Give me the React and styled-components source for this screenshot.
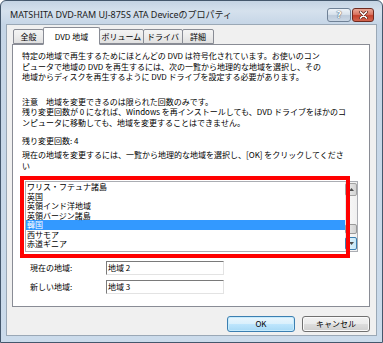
import styled, { createGlobalStyle } from 'styled-components'

const GlobalStyle = createGlobalStyle`
  * { box-sizing: border-box; }
  html, body { margin: 0; padding: 0; background: #fff; }
  body {
    font-family: "Noto Sans CJK JP", "Noto Sans", sans-serif;
    color: #000;
  }
`

const regions = [
  'ワリス・フテュナ諸島',
  '英国',
  '英領インド洋地域',
  '英領バージン諸島',
  '韓国',
  '西サモア',
  '赤道ギニア',
]

const tabs = [
  { label: '全般', w: 31 },
  { label: 'DVD 地域', w: 57, selected: true },
  { label: 'ボリューム', w: 45 },
  { label: 'ドライバ', w: 40 },
  { label: '詳細', w: 32 },
]

function Arrow({ down }) {
  return (
    <svg width="5" height="3" viewBox="0 0 5 3">
      <polygon points={down ? '0,0 5,0 2.5,3' : '0,3 5,3 2.5,0'} fill="#4d4d4d" />
    </svg>
  )
}

function CloseGlyph() {
  return (
    <svg width="9" height="8" viewBox="0 0 9 8">
      <path d="M1.5 1 L7.5 7 M7.5 1 L1.5 7" stroke="#5a1d14" strokeWidth="3" strokeLinecap="round" />
      <path d="M1.5 1 L7.5 7 M7.5 1 L1.5 7" stroke="#fff" strokeWidth="1.7" strokeLinecap="round" />
    </svg>
  )
}

export default function App() {
  return (
    <>
      <GlobalStyle />
      <Window>
        <TitleBar>
          <Title>MATSHITA DVD-RAM UJ-875S ATA Deviceのプロパティ</Title>
          <CaptionButtons>
            <CaptionButton $w={24}>
              <HelpGlyph>?</HelpGlyph>
            </CaptionButton>
            <CaptionButton $w={22} $close>
              <CloseGlyph />
            </CaptionButton>
          </CaptionButtons>
        </TitleBar>

        <Client>
          <TabRow>
            {tabs.map((t, i) => (
              <Tab key={t.label} $w={t.w} $selected={t.selected} $first={i === 0}>
                {t.label}
              </Tab>
            ))}
          </TabRow>

          <Panel>
            <Para>
              特定の地域で再生するためにほとんどの DVD は符号化されています。お使いのコン<br />
              ピュータで地域の DVD を再生するには、次の一覧から地理的な地域を選択し、その<br />
              地域からディスクを再生するように DVD ドライブを設定する必要があります。
            </Para>
            <Para $mt={14}>
              注意　地域を変更できるのは限られた回数のみです。<br />
              残り変更回数が 0 になれば、Windows を再インストールしても、DVD ドライブをほかのコ<br />
              ンピュータに移動しても、地域を変更することはできません。
            </Para>
            <Para $mt={8}>残り変更回数: 4</Para>
            <Para $mt={3.5}>
              現在の地域を変更するには、一覧から地理的な地域を選択し、[OK] をクリックしてくださ<br />
              い
            </Para>

            <ListBox>
              <Items>
                {regions.map((r) => (
                  <Item key={r} $selected={r === '韓国'}>{r}</Item>
                ))}
              </Items>
              <ScrollBar>
                <ScrollButton><Arrow /></ScrollButton>
                <Track>
                  <Thumb />
                </Track>
                <ScrollButton $hover><Arrow down /></ScrollButton>
              </ScrollBar>
              <Highlight />
            </ListBox>

            <FieldRow $mt={9}>
              <FieldLabel>現在の地域:</FieldLabel>
              <FieldValue>地域 2</FieldValue>
            </FieldRow>
            <FieldRow $mt={5}>
              <FieldLabel>新しい地域:</FieldLabel>
              <FieldValue>地域 3</FieldValue>
            </FieldRow>
          </Panel>

          <ButtonRow>
            <Button $default>OK</Button>
            <Button>キャンセル</Button>
          </ButtonRow>
        </Client>
      </Window>
    </>
  )
}

const Window = styled.div`
  width: 383px;
  height: 343px;
  display: flex;
  flex-direction: column;
  border: 1px solid #44576c;
  border-radius: 6px 6px 0 0;
  background: linear-gradient(180deg, #c4d3e3 0px, #d5e1ed 10px, #c5d5e6 24px, #cbdbeb 100%);
  overflow: hidden;
`

const TitleBar = styled.div`
  height: 23px;
  display: flex;
  align-items: flex-start;
  padding: 0 8px 0 9px;
`

const Title = styled.div`
  flex: 1;
  margin-top: 7px;
  font-family: "Noto Sans", "Noto Sans CJK JP", sans-serif;
  font-size: 9px;
  line-height: 14px;
  color: #1c1c1c;
  white-space: nowrap;
`

const CaptionButtons = styled.div`
  display: flex;
  gap: 1px;
  margin-top: 7px;
`

const CaptionButton = styled.div`
  width: ${({ $w }) => $w}px;
  height: 14px;
  border-radius: 3px;
  border: 1px solid ${({ $close }) => ($close ? '#6e2a20' : '#6f8196')};
  background: ${({ $close }) =>
    $close
      ? 'linear-gradient(180deg, #eaa998 0%, #d97461 45%, #c4412c 55%, #d2644e 100%)'
      : 'linear-gradient(180deg, #eef3f8 0%, #d8e2ec 45%, #bdcbdb 55%, #cad7e5 100%)'};
  display: flex;
  align-items: center;
  justify-content: center;
`

const HelpGlyph = styled.span`
  font-family: "DejaVu Sans", sans-serif;
  font-weight: bold;
  font-size: 9px;
  line-height: 1;
  color: #fff;
  text-shadow: 0 0 1px #3d4a58, 0 0 1px #3d4a58;
`

const Client = styled.div`
  flex: 1;
  margin: 0 5px 6px 5px;
  border: 1px solid #9aa8b6;
  background: #f0f0f0;
  padding: 2px 6px 0 5px;
  display: flex;
  flex-direction: column;
`

const TabRow = styled.div`
  position: relative;
  z-index: 1;
  display: flex;
  align-items: flex-end;
  height: 17px;
  padding-left: 1px;
`

const Tab = styled.div`
  width: ${({ $w }) => $w}px;
  height: ${({ $selected }) => ($selected ? 18 : 15)}px;
  margin-bottom: ${({ $selected }) => ($selected ? -1 : 0)}px;
  margin-left: ${({ $first }) => ($first ? 0 : -1)}px;
  border: 1px solid #898c95;
  border-bottom: ${({ $selected }) => ($selected ? '1px solid #fff' : '1px solid #898c95')};
  border-radius: 2px 2px 0 0;
  background: ${({ $selected }) =>
    $selected ? '#fff' : 'linear-gradient(180deg, #f4f4f4 0%, #ececec 50%, #e0e0e0 100%)'};
  position: relative;
  z-index: ${({ $selected }) => ($selected ? 2 : 1)};
  display: flex;
  align-items: center;
  justify-content: center;
  font-size: 8px;
  white-space: nowrap;
`

const Panel = styled.div`
  height: 263px;
  border: 1px solid #898c95;
  background: #fff;
  padding: 6px 9px 0 9px;
  font-size: 8px;
  line-height: 10.5px;
`

const Para = styled.p`
  margin: ${({ $mt }) => $mt || 0}px 0 0 0;
  white-space: nowrap;
`

const ListBox = styled.div`
  position: relative;
  display: flex;
  margin: 10px 0 0 3px;
  width: 333px;
  height: 71px;
  border: 1px solid #abadb3;
  background: #fff;
`

const Items = styled.div`
  flex: 1;
  overflow: hidden;
`

const Item = styled.div`
  height: 9.5px;
  line-height: 9.5px;
  padding-left: 1px;
  font-size: 8px;
  white-space: nowrap;
  background: ${({ $selected }) => ($selected ? '#3399ff' : 'transparent')};
  color: ${({ $selected }) => ($selected ? '#fff' : '#000')};
`

const ScrollBar = styled.div`
  width: 12px;
  display: flex;
  flex-direction: column;
  padding: 1px 0;
  background: linear-gradient(90deg, #e6e6e6, #f6f6f6 40%, #f0f0f0);
`

const ScrollButton = styled.div`
  height: 13px;
  border: 1px solid ${({ $hover }) => ($hover ? '#3c7fb1' : '#a3a3a3')};
  border-radius: 2px;
  background: ${({ $hover }) =>
    $hover
      ? 'linear-gradient(90deg, #e3f4fc, #c8e8f8)'
      : 'linear-gradient(90deg, #f2f2f2, #e2e2e2 50%, #d4d4d4)'};
  display: flex;
  align-items: center;
  justify-content: center;
`

const Track = styled.div`
  flex: 1;
  display: flex;
  flex-direction: column;
  justify-content: flex-end;
  padding-bottom: 3px;
`

const Thumb = styled.div`
  height: 10px;
  border: 1px solid #9a9a9a;
  border-radius: 2px;
  background: linear-gradient(90deg, #f2f2f2, #e0e0e0 50%, #d2d2d2);
`

const Highlight = styled.div`
  position: absolute;
  left: -6px;
  top: -6px;
  width: 330px;
  height: 82px;
  border: 4px solid #ff0000;
  pointer-events: none;
`

const FieldRow = styled.div`
  display: flex;
  align-items: center;
  height: 14px;
  margin: ${({ $mt }) => $mt}px 0 0 8px;
`

const FieldLabel = styled.div`
  width: 76px;
  font-size: 8px;
  white-space: nowrap;
`

const FieldValue = styled.div`
  width: 118px;
  height: 14px;
  border: 1px solid;
  border-color: #7a7a7a #e3e3e3 #e3e3e3 #7a7a7a;
  background: #fff;
  padding-left: 1px;
  font-size: 8px;
  line-height: 12px;
  white-space: nowrap;
`

const ButtonRow = styled.div`
  display: flex;
  justify-content: flex-end;
  gap: 7px;
  margin-top: 9px;
`

const Button = styled.button`
  width: 68px;
  height: 16px;
  padding: 0;
  border-radius: 3px;
  border: 1px solid ${({ $default }) => ($default ? '#3c7fb1' : '#707070')};
  background: ${({ $default }) =>
    $default
      ? 'linear-gradient(180deg, #eaf6fd 0%, #d9f0fc 50%, #bee6fd 51%, #a7d9f5 100%)'
      : 'linear-gradient(180deg, #f2f2f2 0%, #ebebeb 50%, #dddddd 51%, #cfcfcf 100%)'};
  box-shadow: inset 0 0 0 1px ${({ $default }) => ($default ? '#c6ebfd' : '#fafafa')};
  font-family: "Noto Sans CJK JP", "Noto Sans", sans-serif;
  font-size: 8px;
  line-height: 14px;
  color: #000;
`
